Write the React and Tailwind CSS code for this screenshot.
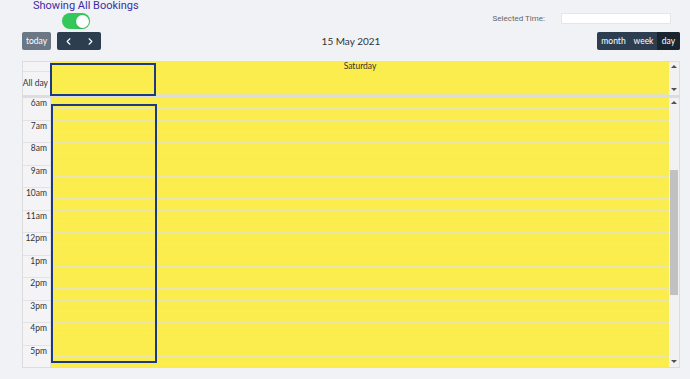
import { ChevronLeft, ChevronRight } from 'lucide-react';

const hours = ['6am', '7am', '8am', '9am', '10am', '11am', '12pm', '1pm', '2pm', '3pm', '4pm', '5pm'];

const Toggle = () => (
  <div className="ml-[29px] mt-[1px] flex h-[16px] w-[28px] items-center justify-end rounded-full bg-[#34c759] pr-[1.5px]">
    <div className="h-[13px] w-[13px] rounded-full bg-white shadow-sm" />
  </div>
);

// fake scrollbar, the calendar scrolls in the original
const ScrollCol = ({ thumb }) => (
  <div className="flex w-[10px] flex-col items-center bg-[#f1f1f1]">
    <div className="mt-[3px] h-0 w-0 border-x-[3px] border-b-[3px] border-x-transparent border-b-[#505050]" />
    <div className="flex-1 w-full px-[1px]">
      {thumb && <div className="mt-[66px] h-[125px] w-full bg-[#c1c1c1]" />}
    </div>
    <div className="mb-[4px] h-0 w-0 border-x-[3px] border-t-[3px] border-x-transparent border-t-[#505050]" />
  </div>
);

const App = () => {
  return (
    <div className="min-h-[379px] w-[690px] bg-[#f1f2f6] font-['Roboto',sans-serif]">
      {/* top bar */}
      <div className="flex h-[32px]">
        <div className="flex flex-col pl-[33px]">
          <span className="whitespace-nowrap text-[11px] leading-[12px] text-[#3b2ea3]">Showing All Bookings</span>
          <Toggle />
        </div>
        <div className="ml-auto mr-[19px] mt-[13px] flex h-[11px] items-center">
          <span className="mr-[16px] text-[8px] text-[#666]">Selected Time:</span>
          <div className="h-[11px] w-[110px] border border-[#e6e6e6] bg-white" />
        </div>
      </div>

      {/* toolbar */}
      <div className="grid h-[18px] grid-cols-[1fr_auto_1fr] items-center pl-[22px] pr-[10px]">
        <div className="flex h-full items-center gap-[6px]">
          <button className="h-full w-[29px] rounded-[2px] bg-[#6b7784] font-['Lato',sans-serif] text-[8.5px] text-white">
            today
          </button>
          <div className="flex h-full items-center rounded-[2px] bg-[#2c3e50]">
            <button className="flex h-full w-[22px] items-center justify-center text-white">
              <ChevronLeft size={11} strokeWidth={2.5} />
            </button>
            <button className="flex h-full w-[22px] items-center justify-center text-white">
              <ChevronRight size={11} strokeWidth={2.5} />
            </button>
          </div>
        </div>
        <div className="font-['Lato',sans-serif] text-[10px] text-[#333]">15 May 2021</div>
        <div className="flex h-full justify-end">
          <div className="flex h-full items-stretch overflow-hidden rounded-[2px] bg-[#2c3e50] font-['Lato',sans-serif] text-[8.5px] text-white">
            <span className="flex w-[33px] items-center justify-center">month</span>
            <span className="flex w-[27px] items-center justify-center">week</span>
            <span className="flex w-[23px] items-center justify-center bg-[#1a252f]">day</span>
          </div>
        </div>
      </div>

      {/* calendar */}
      <div className="relative ml-[22px] mt-[11px] flex h-[307px] w-[658px] flex-col border border-[#dddddd] bg-white font-['Lato',sans-serif] text-[#333]">
        <div className="relative flex h-[33px]">
          <div className="flex w-[27px] flex-col bg-[#f4f4f6]">
            <div className="h-[10px] border-b border-[#e2e2e2]" />
            <div className="flex flex-1 items-center justify-end whitespace-nowrap pr-[2px] text-[8.5px]">All day</div>
          </div>
          <div className="flex flex-1 flex-col border-l border-[#e2e2e2] bg-[#fbed4e]">
            <div className="flex h-[10px] items-center justify-center border-b border-[#e8e3a6] text-[8.5px]">Saturday</div>
            <div className="flex-1 border-b border-[#e8e3a6]" />
          </div>
          <ScrollCol />
          <div className="absolute left-[27px] top-[1px] h-[33px] w-[106px] border-2 border-[#1c3a82]" />
        </div>
        <div className="h-[3px] bg-[#dcdde2]" />
        <div className="flex flex-1 overflow-hidden">
          <div className="w-[27px] bg-[#f4f4f6]">
            {hours.map((h) => (
              <div key={h} className="flex h-[22.5px] justify-end whitespace-nowrap border-b border-[#e3e3e6] pr-[3px] text-[8.5px] leading-[11px]">
                {h}
              </div>
            ))}
          </div>
          <div className="relative flex-1 border-l border-[#e2e2e2] bg-[#fbed4e]">
            {hours.map((h) => (
              <div key={h} className="h-[22.5px]">
                <div className="h-[11.25px] border-b border-[#ebe6ad]" />
                <div className="h-[11.25px] border-b border-[#e8e3a6]" />
              </div>
            ))}
            <div className="absolute left-0 top-[6px] h-[259px] w-[106px] border-2 border-[#1c3a82]" />
          </div>
          <ScrollCol thumb />
        </div>
      </div>
    </div>
  );
};

export default App;
